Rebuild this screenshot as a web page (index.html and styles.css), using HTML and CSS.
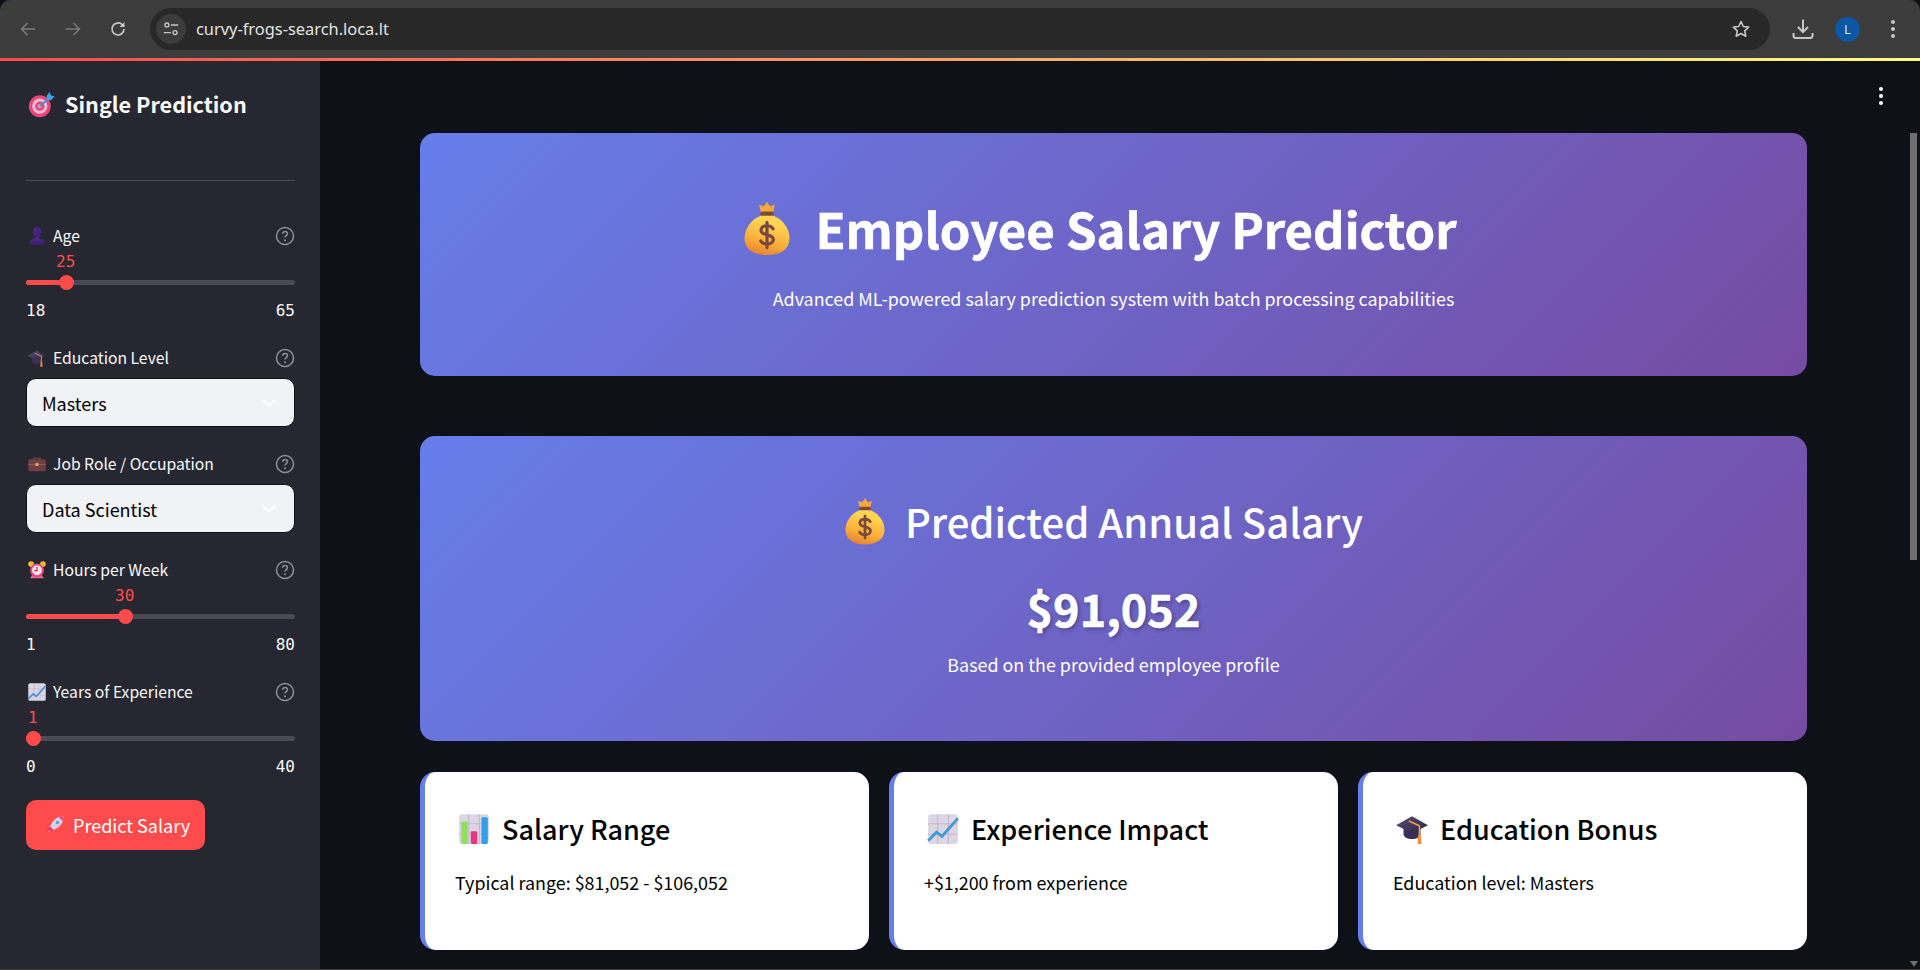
FILE: index.html
```html
<!DOCTYPE html>
<html lang="en">
<head>
  <meta charset="UTF-8">
  <meta name="viewport" content="width=device-width, initial-scale=1">
  <title>Employee Salary Predictor</title>
  <link rel="stylesheet" href="styles.css">
</head>
<body>
  <!-- emoji sprite -->
  <svg class="sprite" aria-hidden="true">
    <defs>
      <linearGradient id="gBag" x1="0.6" y1="0.2" x2="0.35" y2="1">
        <stop offset="0" stop-color="#ffd452"/><stop offset="0.6" stop-color="#f9ad3a"/><stop offset="1" stop-color="#ea8130"/>
      </linearGradient>
      <linearGradient id="gCap" x1="0" y1="0" x2="1" y2="1">
        <stop offset="0" stop-color="#5b4a78"/><stop offset="1" stop-color="#2c2440"/>
      </linearGradient>
      <linearGradient id="gBust" x1="0" y1="0" x2="0" y2="1">
        <stop offset="0" stop-color="#4c2a80"/><stop offset="1" stop-color="#3c1f78"/>
      </linearGradient>
      <symbol id="e-bag" viewBox="0 0 32 32">
        <path d="M11.800 3.500l2.400 1L16 2l1.800 2.500 2.400-1-1 4.500h-6.400z" fill="#f7a93c"/>
        <rect x="12.400" y="7.200" width="7.200" height="2.400" rx="1" fill="#7d4a3a"/>
        <path d="M12.600 9.400h6.800C24.600 11.400 28 16.400 28 21.400c0 6-5 9-12 9s-12-3-12-9c0-5 3.400-10 8.600-12z" fill="url(#gBag)"/>
        <path d="M19.200 16.400c-.5-1-1.700-1.600-3.200-1.600-2 0-3.200 1-3.200 2.400 0 3.200 6.600 1.700 6.600 4.900 0 1.400-1.400 2.400-3.400 2.400-1.500 0-2.800-.6-3.300-1.600M16 13v13.500" fill="none" stroke="#7a4a3c" stroke-width="1.700" stroke-linecap="round"/>
      </symbol>
      <symbol id="e-target" viewBox="0 0 32 32">
        <circle cx="14" cy="18" r="13" fill="#e8457f"/>
        <circle cx="14" cy="18" r="9" fill="#f2bcd0"/>
        <circle cx="14" cy="18" r="5.500" fill="#e8457f"/>
        <circle cx="14" cy="18" r="2.500" fill="#b9b3c2"/>
        <path d="M14 18L26 7.500" stroke="#3f8fd8" stroke-width="2.200"/>
        <path d="M22 6l3.500-5 1.500 4 4.500 1.500-4.500 4.500-4.500-.5z" fill="#36a4ea"/>
      </symbol>
      <symbol id="e-bust" viewBox="0 0 32 32">
        <ellipse cx="16" cy="10" rx="7" ry="8.500" fill="url(#gBust)"/>
        <path d="M12.500 17h7v3c4 1 8.500 3 9.500 9.500H3c1-6.500 5.500-8.500 9.500-9.500z" fill="url(#gBust)"/>
      </symbol>
      <symbol id="e-cap" viewBox="0 0 32 32">
        <path d="M8 14h16v7c0 2.500-3.500 4.500-8 4.500S8 23.500 8 21z" fill="#3a2f58"/>
        <path d="M16 4l15 8.500L16 20 1 12.500z" fill="url(#gCap)"/>
        <path d="M13 8.500l10 4.500v8" fill="none" stroke="#f0a63c" stroke-width="1.400"/>
        <path d="M21.800 21h2.400l.6 9h-3.600z" fill="#f58b3a"/>
      </symbol>
      <symbol id="e-case" viewBox="0 0 32 32">
        <path d="M11 9V6.500h10V9" fill="none" stroke="#6e3f44" stroke-width="2.200"/>
        <rect x="2" y="8.500" width="28" height="19" rx="2.500" fill="#6e3f44"/>
        <rect x="2" y="16" width="28" height="1.600" fill="#8d5a5a"/>
        <rect x="13.500" y="14.500" width="5" height="4.500" rx="1" fill="#f0a63c"/>
      </symbol>
      <symbol id="e-clock" viewBox="0 0 32 32">
        <circle cx="6.500" cy="6.500" r="4.500" fill="#f7b731"/>
        <circle cx="25.500" cy="6.500" r="4.500" fill="#f7b731"/>
        <path d="M5 29l3-5h16l3 5z" fill="#e06a92"/>
        <circle cx="16" cy="16.500" r="11" fill="#e8457f"/>
        <circle cx="16" cy="16.500" r="8" fill="#f7dfe6"/>
        <path d="M16 11v6h-4" fill="none" stroke="#b3224f" stroke-width="1.700"/>
      </symbol>
      <symbol id="e-trend" viewBox="0 0 32 32">
        <rect x="2" y="2" width="28" height="28" rx="3" fill="#dcd5e3"/>
        <path d="M11 2v28M21 2v28M2 11h28M2 21h28" stroke="#c2b8cc" stroke-width="1"/>
        <path d="M2 27l8-8 5 4L30 6" fill="none" stroke="#3f97dc" stroke-width="2.600"/>
      </symbol>
      <symbol id="e-bars" viewBox="0 0 32 32">
        <rect x="2" y="2" width="28" height="28" rx="3" fill="#dcd5e3"/>
        <path d="M11 2v28M21 2v28M2 11h28M2 21h28" stroke="#c2b8cc" stroke-width="1"/>
        <rect x="4" y="9" width="6" height="21" rx="1" fill="#8ee05c"/>
        <rect x="13" y="18" width="6" height="12" rx="1" fill="#e8357f"/>
        <rect x="23" y="5" width="6" height="25" rx="1" fill="#2f9fea"/>
      </symbol>
      <symbol id="e-rocket" viewBox="0 0 32 32">
        <path d="M4 21l6-2 3 3 -2 6-2-3-4 4 1-4-4-1z" fill="#e8357f"/>
        <path d="M3 29l4-5 1.500 1.500z" fill="#f7a83a"/>
        <path d="M29.500 2.500c-7-.5-13 2.500-17 8L8 18l6 6 7.500-4.500c5.500-4 8.500-10 8-17z" fill="#d7d0e0"/>
        <path d="M29.500 2.500c-2.500-.2-5 .2-7.300 1l6.300 6.300c.8-2.300 1.200-4.800 1-7.300z" fill="#e8457f"/>
        <circle cx="20" cy="12" r="2.800" fill="#4aa3ea"/>
      </symbol>
      <symbol id="i-help" viewBox="0 0 20 20">
        <circle cx="10" cy="10" r="8.500" fill="none" stroke="currentColor" stroke-width="1.500"/>
        <path d="M7.600 7.800c0-1.400 1.100-2.300 2.500-2.300s2.400.9 2.400 2.200c0 1.900-2.500 1.900-2.500 3.800" fill="none" stroke="currentColor" stroke-width="1.500"/>
        <circle cx="10" cy="14.300" r="1" fill="currentColor"/>
      </symbol>
    </defs>
  </svg>

  <header class="browser-bar">
    <button class="nav-btn dim" aria-label="Back">
      <svg viewBox="0 0 20 20" width="20" height="20"><path d="M17 10H4M9.500 4L3.500 10l6 6" fill="none" stroke="currentColor" stroke-width="1.600"/></svg>
    </button>
    <button class="nav-btn dim" aria-label="Forward">
      <svg viewBox="0 0 20 20" width="20" height="20"><path d="M3 10h13M10.500 4l6 6-6 6" fill="none" stroke="currentColor" stroke-width="1.600"/></svg>
    </button>
    <button class="nav-btn" aria-label="Reload">
      <svg viewBox="0 0 20 20" width="20" height="20"><path d="M16 10a6 6 0 1 1-1.800-4.300L16 7.500" fill="none" stroke="currentColor" stroke-width="1.700"/><path d="M16.500 3v5h-5z" fill="currentColor"/></svg>
    </button>
    <div class="url-bar">
      <span class="site-icon">
        <svg viewBox="0 0 20 20" width="18" height="18"><circle cx="5.500" cy="5.500" r="2.200" fill="none" stroke="currentColor" stroke-width="1.500"/><path d="M10 5.500h8M2 14h8" stroke="currentColor" stroke-width="1.500"/><circle cx="14.500" cy="14" r="2.200" fill="none" stroke="currentColor" stroke-width="1.500"/></svg>
      </span>
      <span class="url-text">curvy-frogs-search.loca.lt</span>
      <svg class="star" viewBox="0 0 20 20" width="20" height="20"><path d="M10 2.500l2.300 5 5.400.6-4 3.700 1.100 5.400L10 14.500l-4.800 2.700 1.100-5.400-4-3.700 5.400-.6z" fill="none" stroke="currentColor" stroke-width="1.600" stroke-linejoin="round"/></svg>
    </div>
    <div class="bar-tools">
      <svg viewBox="0 0 22 22" width="22" height="22"><path d="M11 1.500v12M6 9l5 5 5-5" fill="none" stroke="currentColor" stroke-width="2"/><path d="M1.500 15v2.500a2.500 2.500 0 0 0 2.500 2.500h14a2.500 2.500 0 0 0 2.500-2.500V15" fill="none" stroke="currentColor" stroke-width="2"/></svg>
      <span class="avatar">L</span>
      <span class="dots-v chrome-dots"><i></i><i></i><i></i></span>
    </div>
  </header>
  <div class="deco-line"></div>

  <div class="app">
    <aside class="sidebar">
      <h2 class="side-title"><svg class="emoji-side-title"><use href="#e-target"/></svg>Single Prediction</h2>
      <hr class="side-rule">

      <div class="field first">
        <div class="field-label"><svg class="emoji-sm"><use href="#e-bust"/></svg><span>Age</span><svg class="help"><use href="#i-help"/></svg></div>
        <div class="slider">
          <div class="slider-value" style="margin-left: 30px">25</div>
          <div class="track"><div class="fill" style="width: 40px"></div><div class="thumb" style="left: 40px"></div></div>
          <div class="range"><span>18</span><span>65</span></div>
        </div>
      </div>

      <div class="field">
        <div class="field-label"><svg class="emoji-sm"><use href="#e-cap"/></svg><span>Education Level</span><svg class="help"><use href="#i-help"/></svg></div>
        <div class="select"><span>Masters</span><svg class="chevron" viewBox="0 0 14 8" width="14" height="8"><path d="M1 1l6 5.500L13 1" fill="none" stroke="currentColor" stroke-width="2"/></svg></div>
      </div>

      <div class="field">
        <div class="field-label"><svg class="emoji-sm"><use href="#e-case"/></svg><span>Job Role / Occupation</span><svg class="help"><use href="#i-help"/></svg></div>
        <div class="select"><span>Data Scientist</span><svg class="chevron" viewBox="0 0 14 8" width="14" height="8"><path d="M1 1l6 5.500L13 1" fill="none" stroke="currentColor" stroke-width="2"/></svg></div>
      </div>

      <div class="field">
        <div class="field-label"><svg class="emoji-sm"><use href="#e-clock"/></svg><span>Hours per Week</span><svg class="help"><use href="#i-help"/></svg></div>
        <div class="slider">
          <div class="slider-value" style="margin-left: 89px">30</div>
          <div class="track"><div class="fill" style="width: 99px"></div><div class="thumb" style="left: 99px"></div></div>
          <div class="range"><span>1</span><span>80</span></div>
        </div>
      </div>

      <div class="field">
        <div class="field-label"><svg class="emoji-sm"><use href="#e-trend"/></svg><span>Years of Experience</span><svg class="help"><use href="#i-help"/></svg></div>
        <div class="slider">
          <div class="slider-value" style="margin-left: 2px">1</div>
          <div class="track"><div class="fill" style="width: 7px"></div><div class="thumb" style="left: 7px"></div></div>
          <div class="range"><span>0</span><span>40</span></div>
        </div>
      </div>

      <button class="predict-btn"><svg class="emoji-btn"><use href="#e-rocket"/></svg>Predict Salary</button>
    </aside>

    <main class="main">
      <section class="hero">
        <h1><svg class="emoji-hero"><use href="#e-bag"/></svg>Employee Salary Predictor</h1>
        <p>Advanced ML-powered salary prediction system with batch processing capabilities</p>
      </section>

      <section class="result">
        <h2><svg class="emoji-result"><use href="#e-bag"/></svg>Predicted Annual Salary</h2>
        <div class="amount">$91,052</div>
        <p>Based on the provided employee profile</p>
      </section>

      <section class="cards">
        <div class="card">
          <h3><svg class="emoji-card"><use href="#e-bars"/></svg>Salary Range</h3>
          <p>Typical range: $81,052 - $106,052</p>
        </div>
        <div class="card">
          <h3><svg class="emoji-card"><use href="#e-trend"/></svg>Experience Impact</h3>
          <p>+$1,200 from experience</p>
        </div>
        <div class="card">
          <h3><svg class="emoji-card"><use href="#e-cap"/></svg>Education Bonus</h3>
          <p>Education level: Masters</p>
        </div>
      </section>

      <span class="dots-v main-menu"><i></i><i></i><i></i></span>
      <div class="scroll-thumb"></div>
      <div class="scroll-down"></div>
    </main>
  </div>
</body>
</html>
```

FILE: styles.css
```css
* {
  box-sizing: border-box;
}
html, body {
  margin: 0;
  height: 970px;
  overflow: hidden;
}
body {
  font-family: "Noto Sans CJK SC", "Noto Sans", sans-serif;
  background: #0e1117;
  color: #fafafa;
}
.sprite {
  position: absolute;
  width: 0;
  height: 0;
}

/* browser chrome */
.browser-bar {
  height: 58px;
  background: #3c3c3c;
  border-radius: 10px 10px 0 0;
  display: flex;
  align-items: center;
  padding: 0 0 0 18px;
  color: #c7c7c7;
}
.nav-btn {
  width: 20px;
  height: 20px;
  padding: 0;
  margin-right: 25px;
  background: none;
  border: none;
  color: #c7c7c7;
}
.nav-btn.dim {
  color: #7a7a7a;
}
.url-bar {
  width: 1620px;
  height: 42px;
  margin-left: -3px;
  background: #282828;
  border-radius: 21px;
  display: flex;
  align-items: center;
  padding: 0 19px 0 6px;
}
.site-icon {
  width: 30px;
  height: 30px;
  border-radius: 50%;
  background: #3c3c3c;
  display: flex;
  align-items: center;
  justify-content: center;
  margin-right: 10px;
}
.url-text {
  flex: 1;
  padding-bottom: 2px;
  font-family: "Noto Sans", sans-serif;
  font-size: 16.4px;
  color: #e3e3e3;
}
.bar-tools {
  display: flex;
  align-items: center;
  margin-left: 22px;
}
.avatar {
  width: 25px;
  height: 25px;
  margin-left: 21px;
  border-radius: 50%;
  background: #0b57a4;
  color: #d6e4f5;
  font: 13px/25px "Noto Sans", sans-serif;
  text-align: center;
}
.dots-v {
  display: flex;
  flex-direction: column;
  gap: 3px;
}
.dots-v i {
  width: 4px;
  height: 4px;
  border-radius: 50%;
  background: #c7c7c7;
}
.chrome-dots {
  margin-left: 31px;
}
.deco-line {
  height: 3px;
  background: linear-gradient(90deg, #ff4b4b, #fffd80);
}

/* layout */
.app {
  display: flex;
  height: 909px;
  border-bottom: 1px solid #3c3c3c;
}
.sidebar {
  width: 320px;
  flex-shrink: 0;
  background: #262730;
  padding: 23px 25px 0 26px;
}
.side-title {
  margin: 0;
  height: 40px;
  display: flex;
  align-items: center;
  font-size: 21.6px;
  line-height: 40px;
  font-weight: 600;
}
.emoji-side-title {
  width: 27px;
  height: 27px;
  margin: 0 10px 0 2px;
}
.side-rule {
  margin: 56px 0 0;
  border: none;
  border-top: 1px solid #4b4c57;
}

/* sidebar widgets */
.field {
  margin-top: 26px;
}
.field.first {
  margin-top: 44px;
}
.field-label {
  display: flex;
  align-items: center;
  height: 22px;
  font-size: 15.7px;
  line-height: 22px;
}
.field-label span {
  flex: 1;
}
.emoji-sm {
  width: 20px;
  height: 20px;
  margin: 0 6px 0 1px;
}
.help {
  width: 20px;
  height: 20px;
  color: #8f8f94;
}
.slider-value {
  font-family: "DejaVu Sans Mono", monospace;
  font-size: 16px;
  line-height: 20px;
  margin-top: 5px;
  color: #ff4b4b;
}
.track {
  position: relative;
  height: 5px;
  margin-top: 8px;
  background: #4a4a55;
  border-radius: 3px;
}
.fill {
  height: 100%;
  background: #ff4b4b;
  border-radius: 3px;
}
.thumb {
  position: absolute;
  top: -5px;
  width: 15px;
  height: 15px;
  margin-left: -7.5px;
  background: #ff4b4b;
  border-radius: 50%;
}
.range {
  display: flex;
  justify-content: space-between;
  margin-top: 16px;
  font-family: "DejaVu Sans Mono", monospace;
  font-size: 16px;
  line-height: 20px;
}
.select {
  display: flex;
  align-items: center;
  justify-content: space-between;
  height: 49px;
  margin-top: 9px;
  padding: 0 18px 0 15px;
  background: #f0f2f6;
  border: 1px solid #111;
  border-radius: 10px;
  color: #000;
  font-size: 18px;
}
.chevron {
  color: #fff;
}
.predict-btn {
  display: flex;
  align-items: center;
  width: 179px;
  height: 50px;
  margin-top: 23px;
  padding: 0 0 0 19px;
  border: none;
  border-radius: 10px;
  background: #ff4b4b;
  color: #fff;
  font-family: inherit;
  font-size: 18px;
}
.emoji-btn {
  width: 20px;
  height: 20px;
  margin-right: 8px;
}

/* main column */
.main {
  position: relative;
  flex: 1;
  padding: 72px 113px 0 100px;
}
.hero, .result {
  text-align: center;
  background: linear-gradient(135deg, #667eea 0%, #764ba2 100%);
  border-radius: 15px;
}
.hero {
  height: 243px;
  padding-top: 62px;
  margin-bottom: 60px;
}
.hero h1 {
  margin: 0;
  padding-right: 33px;
  display: flex;
  align-items: center;
  justify-content: center;
  font-size: 49px;
  line-height: 66px;
  font-weight: 700;
  color: #fff;
  -webkit-text-stroke: 0.6px #fff;
}
.emoji-hero {
  width: 60px;
  height: 60px;
  margin-right: 18px;
}
.hero p {
  margin: 22px 0 0;
  font-size: 17.9px;
  line-height: 30px;
  color: #fff;
}
.result {
  height: 305px;
  padding-top: 58px;
  margin-bottom: 31px;
}
.result h2 {
  margin: 0;
  padding-right: 25px;
  display: flex;
  align-items: center;
  justify-content: center;
  font-size: 40px;
  line-height: 54px;
  font-weight: 500;
  color: #fff;
}
.emoji-result {
  width: 52px;
  height: 52px;
  margin-right: 14px;
}
.amount {
  margin-top: 30px;
  font-size: 45px;
  line-height: 60px;
  font-weight: 700;
  color: #fff;
  -webkit-text-stroke: 0.5px #fff;
  text-shadow: 2px 2px 4px rgba(0,0,0,0.3);
}
.result p {
  margin: 11px 0 0;
  font-size: 17.9px;
  line-height: 30px;
  color: #fff;
}
.cards {
  display: grid;
  grid-template-columns: repeat(3, 1fr);
  gap: 20px;
}
.card {
  height: 178px;
  padding: 30px 30px 0;
  background: #fff;
  border-left: 5px solid #667eea;
  border-radius: 15px;
  color: #000;
}
.card h3 {
  margin: 0;
  display: flex;
  align-items: center;
  font-size: 27px;
  line-height: 54px;
  font-weight: 500;
}
.emoji-card {
  width: 34px;
  height: 34px;
  margin: 0 11px 0 2px;
}
.card p {
  margin: 13px 0 0;
  font-size: 17.9px;
  line-height: 26px;
}
.main-menu {
  position: absolute;
  top: 26px;
  right: 37px;
}
.main-menu i {
  background: #fff;
}
.scroll-thumb {
  position: absolute;
  top: 72px;
  right: 3px;
  width: 7px;
  height: 427px;
  background: #6e6e6e;
}
.scroll-down {
  position: absolute;
  right: 2px;
  bottom: 2px;
  border-left: 4px solid transparent;
  border-right: 4px solid transparent;
  border-top: 6px solid #6e6e6e;
}
```
